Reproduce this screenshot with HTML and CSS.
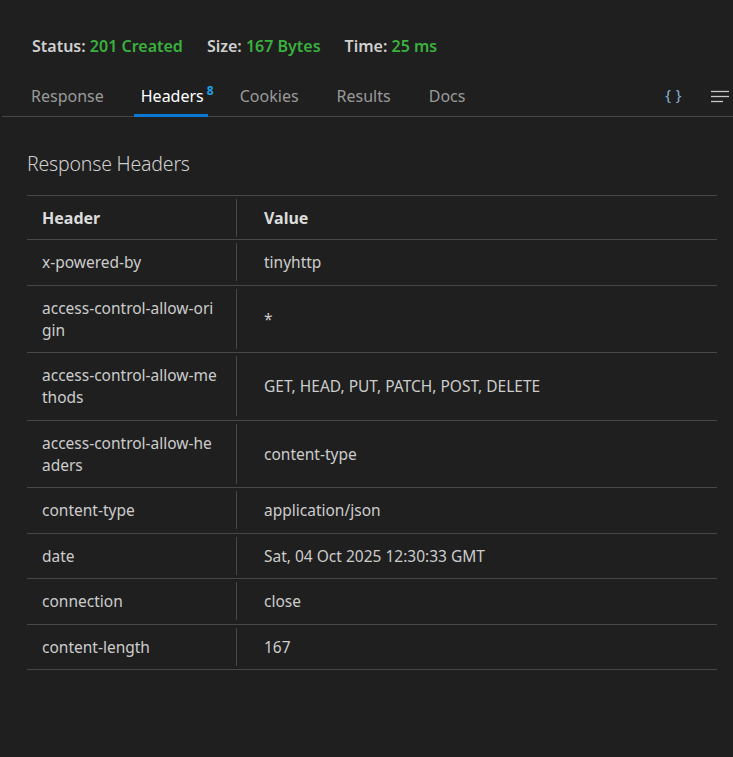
FILE: index.html
```html
<!DOCTYPE html>
<html>
<head>
<meta charset="utf-8">
<link rel="stylesheet" href="styles.css">
</head>
<body>
<div class="page">
  <div class="status">
    <span class="stat">Status: <span class="ok">201 Created</span></span>
    <span class="stat">Size: <span class="ok">167 Bytes</span></span>
    <span class="stat">Time: <span class="ok">25 ms</span></span>
  </div>
  <div class="tabs">
    <div class="tab first">Response</div>
    <div class="tab active">Headers<sup class="badge">8</sup></div>
    <div class="tab">Cookies</div>
    <div class="tab">Results</div>
    <div class="tab">Docs</div>
    <div class="spacer"></div>
    <div class="icon braces">{ }</div>
    <svg class="icon wrap" width="20" height="14" viewBox="0 0 20 14">
      <line x1="1" y1="2.5" x2="19" y2="2.5" stroke="#c8c8c8" stroke-width="1.3"/>
      <line x1="1" y1="7.5" x2="19" y2="7.5" stroke="#c8c8c8" stroke-width="1.3"/>
      <line x1="1" y1="12.5" x2="13" y2="12.5" stroke="#c8c8c8" stroke-width="1.3"/>
    </svg>
  </div>
  <h2 class="title">Response Headers</h2>
  <div class="table">
    <div class="row head"><div class="k">Header</div><div class="v">Value</div></div>
    <div class="row"><div class="k">x-powered-by</div><div class="v">tinyhttp</div></div>
    <div class="row"><div class="k">access-control-allow-origin</div><div class="v">*</div></div>
    <div class="row"><div class="k">access-control-allow-methods</div><div class="v">GET, HEAD, PUT, PATCH, POST, DELETE</div></div>
    <div class="row"><div class="k">access-control-allow-headers</div><div class="v">content-type</div></div>
    <div class="row"><div class="k">content-type</div><div class="v">application/json</div></div>
    <div class="row"><div class="k">date</div><div class="v">Sat, 04 Oct 2025 12:30:33 GMT</div></div>
    <div class="row"><div class="k">connection</div><div class="v">close</div></div>
    <div class="row"><div class="k">content-length</div><div class="v">167</div></div>
  </div>
</div>
</body>
</html>
```
FILE: styles.css
```css
html, body {
  margin: 0;
  padding: 0;
  background: #1f1f1f;
}
body {
  font-family: "Noto Sans", "Open Sans", sans-serif;
  color: #cccccc;
  width: 733px;
  height: 757px;
  overflow: hidden;
}
.page {
  padding-top: 34px;
}
.status {
  display: flex;
  gap: 24px;
  padding-left: 32px;
  font-size: 16px;
  font-weight: 600;
  color: #d0d0d0;
  line-height: 24px;
}
.ok {
  color: #3ab03e;
}
.tabs {
  display: flex;
  align-items: flex-start;
  margin-top: 13px;
  margin-left: 2px;
  border-bottom: 1px solid #474747;
  height: 46px;
  box-sizing: border-box;
}
.tab {
  font-size: 16px;
  color: #9a9a9a;
  padding: 6px 19px 0 19px;
  height: 46px;
  line-height: 38px;
  box-sizing: border-box;
  white-space: nowrap;
}
.tab.first {
  padding-left: 29px;
  padding-right: 20px;
}
.tab.active {
  color: #ffffff;
  border-bottom: 3px solid #0a78d4;
  padding: 6px 0 0 7px;
  margin: 0 13px 0 10px;
  width: 74px;
}
.badge {
  color: #1ea0e6;
  font-size: 12px;
  font-weight: 700;
  vertical-align: 0;
  position: relative;
  top: -7px;
  margin-left: 3px;
}
.spacer {
  flex: 1;
}
.icon.braces {
  color: #8ab0d4;
  font-size: 15px;
  margin-right: 28px;
  letter-spacing: 0.5px;
  line-height: 20px;
  margin-top: 13px;
}
.icon.wrap {
  margin-right: 3px;
  margin-top: 18px;
}
.title {
  margin: 34px 0 0 27px;
  font-size: 19.5px;
  font-weight: 300;
  color: #cfcfcf;
  line-height: 26px;
  letter-spacing: -0.2px;
}
.table {
  margin: 18px 16px 0 27px;
  border-top: 1px solid #474747;
}
.row {
  display: grid;
  grid-template-columns: 209px 1fr;
  padding: 3px 0 3.5px 0;
  border-bottom: 1px solid #474747;
  align-items: stretch;
}
.k, .v {
  padding: 8px 15px;
  font-size: 15.5px;
  line-height: 22px;
  display: flex;
  align-items: center;
}
.k {
  word-break: break-all;
  padding-right: 18px;
}
.v {
  border-left: 1px solid #474747;
  padding-left: 27px;
}
.row.head {
  padding: 3px 0 2px 0;
}
.row.head .k, .row.head .v {
  font-weight: 700;
  font-size: 16px;
  color: #dcdcdc;
}
```
